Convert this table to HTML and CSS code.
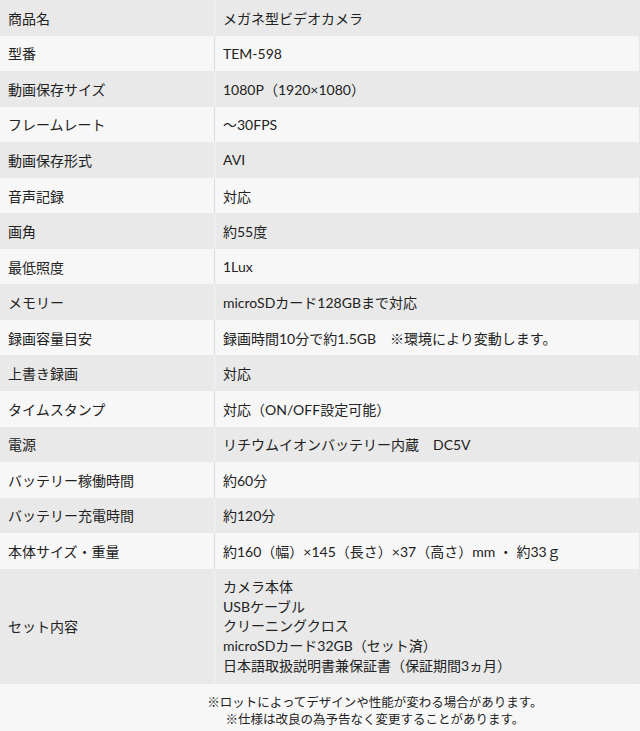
FILE: index.html
```html
<!DOCTYPE html>
<html lang="ja">
<head>
<meta charset="utf-8">
<link rel="stylesheet" href="styles.css">
</head>
<body>
<div class="spec">
  <div class="row odd"><div class="label">商品名</div><div class="value">メガネ型ビデオカメラ</div></div>
  <div class="row"><div class="label">型番</div><div class="value">TEM-598</div></div>
  <div class="row odd"><div class="label">動画保存サイズ</div><div class="value">1080P（1920×1080）</div></div>
  <div class="row"><div class="label">フレームレート</div><div class="value">～30FPS</div></div>
  <div class="row odd"><div class="label">動画保存形式</div><div class="value">AVI</div></div>
  <div class="row"><div class="label">音声記録</div><div class="value">対応</div></div>
  <div class="row odd"><div class="label">画角</div><div class="value">約55度</div></div>
  <div class="row"><div class="label">最低照度</div><div class="value">1Lux</div></div>
  <div class="row odd"><div class="label">メモリー</div><div class="value">microSDカード128GBまで対応</div></div>
  <div class="row"><div class="label">録画容量目安</div><div class="value">録画時間10分で約1.5GB　※環境により変動します。</div></div>
  <div class="row odd"><div class="label">上書き録画</div><div class="value">対応</div></div>
  <div class="row"><div class="label">タイムスタンプ</div><div class="value">対応（ON/OFF設定可能）</div></div>
  <div class="row odd"><div class="label">電源</div><div class="value">リチウムイオンバッテリー内蔵　DC5V</div></div>
  <div class="row"><div class="label">バッテリー稼働時間</div><div class="value">約60分</div></div>
  <div class="row odd"><div class="label">バッテリー充電時間</div><div class="value">約120分</div></div>
  <div class="row"><div class="label">本体サイズ・重量</div><div class="value">約160（幅）×145（長さ）×37（高さ）mm ・ 約33ｇ</div></div>
  <div class="row odd tall"><div class="label">セット内容</div><div class="value multi">カメラ本体<br>USBケーブル<br>クリーニングクロス<br>microSDカード32GB（セット済）<br>日本語取扱説明書兼保証書（保証期間3ヵ月）</div></div>
</div>
<div class="notes">
  <p>※ロットによってデザインや性能が変わる場合があります。</p>
  <p>※仕様は改良の為予告なく変更することがあります。</p>
</div>
</body>
</html>
```

FILE: styles.css
```css
* { box-sizing: border-box; }
html, body {
  margin: 0;
  padding: 0;
  background: #f7f7f7;
}
body {
  width: 640px;
  height: 731px;
  overflow: hidden;
  font-family: "Lato", "Noto Sans CJK JP", sans-serif;
  color: #222;
  font-size: 14px;
}
.spec {
  display: flex;
  flex-direction: column;
}
.row {
  display: flex;
  height: 35.56px;
  align-items: stretch;
  background: #f7f7f7;
}
.row.odd {
  background: #e9e9e9;
}
.row.tall {
  height: 115px;
}
.label {
  width: 215px;
  padding-left: 8px;
  display: flex;
  align-items: center;
  border-right: 1px solid #dcdcdc;
}
.row.odd .label {
  border-right-color: #f3f3f3;
}
.value {
  flex: 1;
  padding-left: 8px;
  display: flex;
  align-items: center;
  border-right: 1px solid #e6e6e6;
}
.value.multi {
  display: block;
  padding-top: 8px;
  line-height: 19.8px;
}
.notes {
  padding: 10px 0 0 110px;
  text-align: center;
  font-size: 12.5px;
  line-height: 17px;
  color: #222;
}
.notes p {
  margin: 0;
}
```
